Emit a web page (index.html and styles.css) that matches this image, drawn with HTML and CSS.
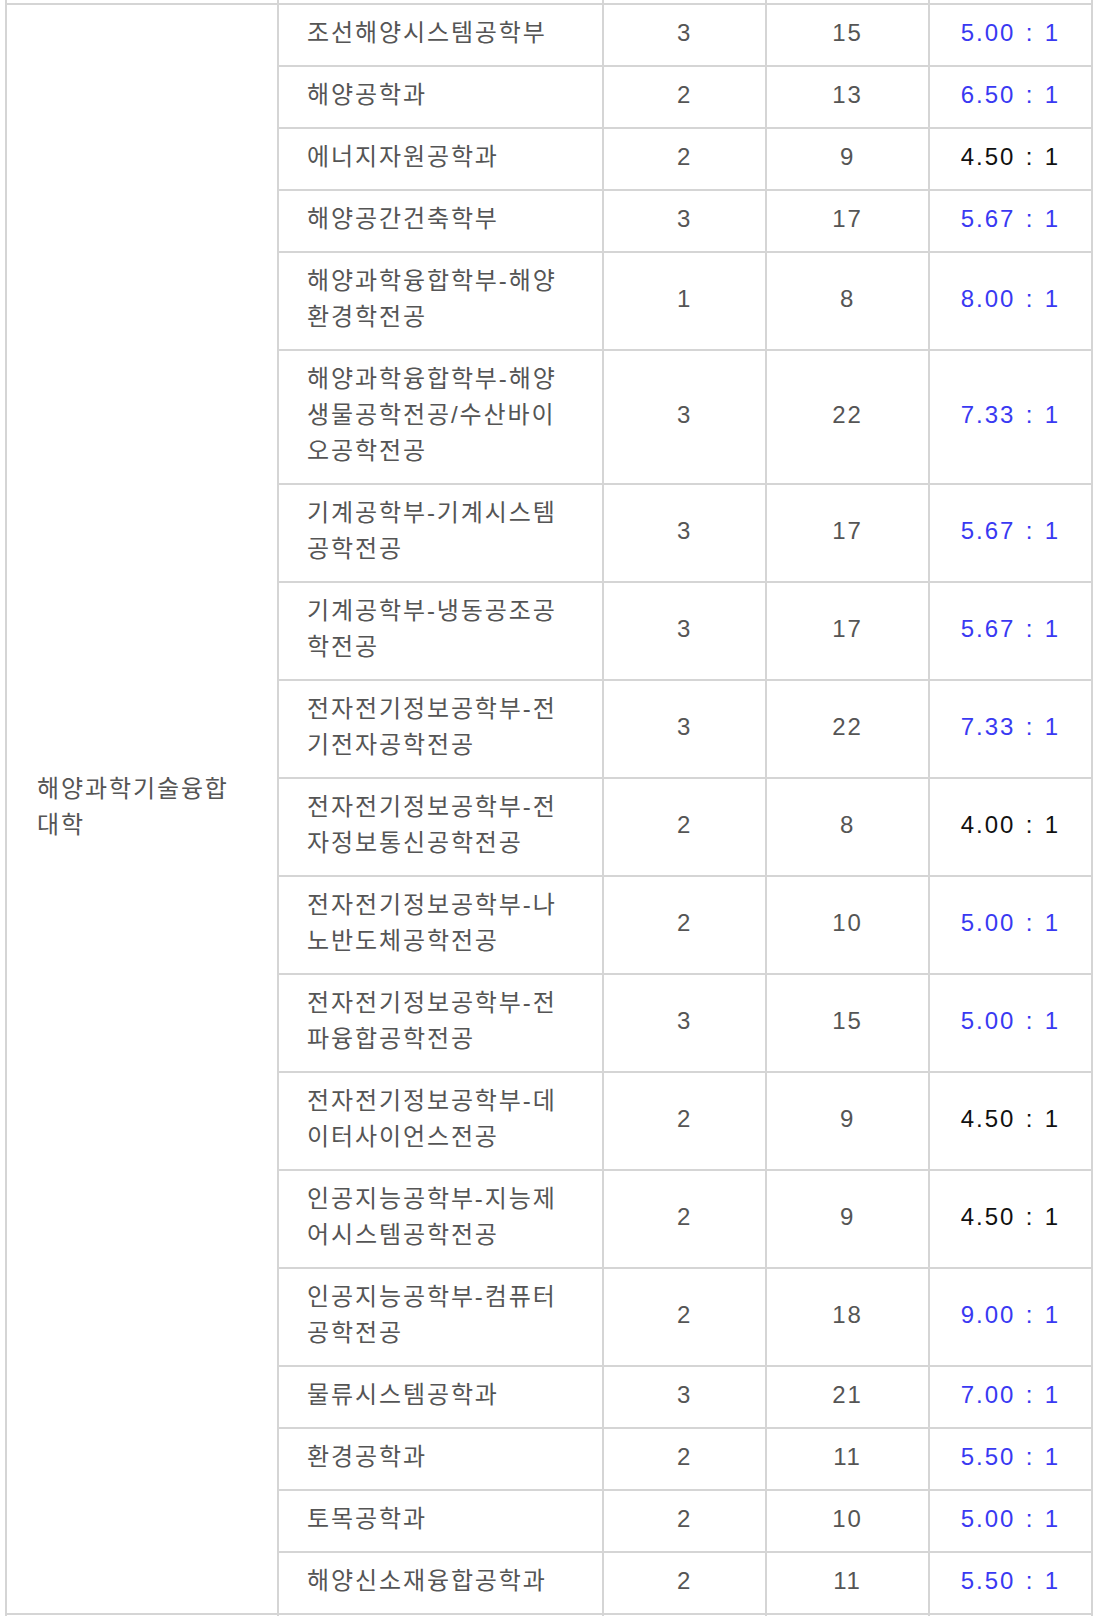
FILE: index.html
```html
<!DOCTYPE html>
<html lang="ko">

<head>
	<meta charset="UTF-8">
	<link rel="stylesheet" href="styles.css">
</head>

<body>
	<div class="wrap">
	<table class="rate">
		<colgroup>
			<col class="c-college">
			<col class="c-dept">
			<col class="c-num">
			<col class="c-num">
			<col class="c-num">
		</colgroup>
		<tbody>
			<!-- 위쪽 행은 잘려서 테두리만 보임 -->
			<tr class="cut">
				<td></td><td></td><td></td><td></td><td></td>
			</tr>
			<tr>
				<td class="college" rowspan="19">해양과학기술융합대학</td>
				<td class="dept">조선해양시스템공학부</td>
				<td>3</td><td>15</td><td class="ratio hi">5.00 : 1</td>
			</tr>
			<tr>
				<td class="dept">해양공학과</td>
				<td>2</td><td>13</td><td class="ratio hi">6.50 : 1</td>
			</tr>
			<tr>
				<td class="dept">에너지자원공학과</td>
				<td>2</td><td>9</td><td class="ratio">4.50 : 1</td>
			</tr>
			<tr>
				<td class="dept">해양공간건축학부</td>
				<td>3</td><td>17</td><td class="ratio hi">5.67 : 1</td>
			</tr>
			<tr>
				<td class="dept">해양과학융합학부-해양환경학전공</td>
				<td>1</td><td>8</td><td class="ratio hi">8.00 : 1</td>
			</tr>
			<tr>
				<td class="dept">해양과학융합학부-해양생물공학전공/수산바이오공학전공</td>
				<td>3</td><td>22</td><td class="ratio hi">7.33 : 1</td>
			</tr>
			<tr>
				<td class="dept">기계공학부-기계시스템공학전공</td>
				<td>3</td><td>17</td><td class="ratio hi">5.67 : 1</td>
			</tr>
			<tr>
				<td class="dept">기계공학부-냉동공조공학전공</td>
				<td>3</td><td>17</td><td class="ratio hi">5.67 : 1</td>
			</tr>
			<tr>
				<td class="dept">전자전기정보공학부-전기전자공학전공</td>
				<td>3</td><td>22</td><td class="ratio hi">7.33 : 1</td>
			</tr>
			<tr>
				<td class="dept">전자전기정보공학부-전자정보통신공학전공</td>
				<td>2</td><td>8</td><td class="ratio">4.00 : 1</td>
			</tr>
			<tr>
				<td class="dept">전자전기정보공학부-나노반도체공학전공</td>
				<td>2</td><td>10</td><td class="ratio hi">5.00 : 1</td>
			</tr>
			<tr>
				<td class="dept">전자전기정보공학부-전파융합공학전공</td>
				<td>3</td><td>15</td><td class="ratio hi">5.00 : 1</td>
			</tr>
			<tr>
				<td class="dept">전자전기정보공학부-데이터사이언스전공</td>
				<td>2</td><td>9</td><td class="ratio">4.50 : 1</td>
			</tr>
			<tr>
				<td class="dept">인공지능공학부-지능제어시스템공학전공</td>
				<td>2</td><td>9</td><td class="ratio">4.50 : 1</td>
			</tr>
			<tr>
				<td class="dept">인공지능공학부-컴퓨터공학전공</td>
				<td>2</td><td>18</td><td class="ratio hi">9.00 : 1</td>
			</tr>
			<tr>
				<td class="dept">물류시스템공학과</td>
				<td>3</td><td>21</td><td class="ratio hi">7.00 : 1</td>
			</tr>
			<tr>
				<td class="dept">환경공학과</td>
				<td>2</td><td>11</td><td class="ratio hi">5.50 : 1</td>
			</tr>
			<tr>
				<td class="dept">토목공학과</td>
				<td>2</td><td>10</td><td class="ratio hi">5.00 : 1</td>
			</tr>
			<tr>
				<td class="dept">해양신소재융합공학과</td>
				<td>2</td><td>11</td><td class="ratio hi">5.50 : 1</td>
			</tr>
			<!-- 다음 대학 행 (화면 아래로 이어짐) -->
			<tr>
				<td></td><td class="dept"></td><td></td><td></td><td></td>
			</tr>
		</tbody>
	</table>
	</div>
</body>

</html>
```

FILE: styles.css
```css
* {
	margin  : 0;
	padding : 0;
	box-sizing: border-box;
}
body {
	background : #fff;
	font-family: "Liberation Sans", "Noto Sans CJK KR", sans-serif;
}
.wrap {
	padding-left : 5px;
}

table.rate {
	width : 1088px;
	table-layout : fixed;
	border-collapse : separate;
	border-spacing : 0;
	border-left : solid 2px #d5d5d5;
}
col.c-college { width : 272px; }
col.c-dept    { width : 325px; }
col.c-num     { width : 163px; }

.rate td {
	height : 62px;
	padding : 10px 0 14px;

	border-right  : solid 2px #d5d5d5;
	border-bottom : solid 2px #d5d5d5;

	font-size   : 24px;
	line-height : 36px;
	letter-spacing : 1.9px;
	color : #555;
	text-align : center;
	vertical-align : middle;
}
.rate tr.cut td {
	height : 5px;
	padding : 0;
	line-height : 0;
	font-size : 0;
}

.rate td.college {
	padding : 10px 32px 14px 30px;
	text-align : left;
}
.rate td.dept {
	padding-left  : 28px;
	padding-right : 28px;
	text-align : left;
}
.rate td.ratio {
	color : #111;
	word-spacing : 2px;
}
.rate td.ratio.hi {
	color : #3939f2;
}
```
